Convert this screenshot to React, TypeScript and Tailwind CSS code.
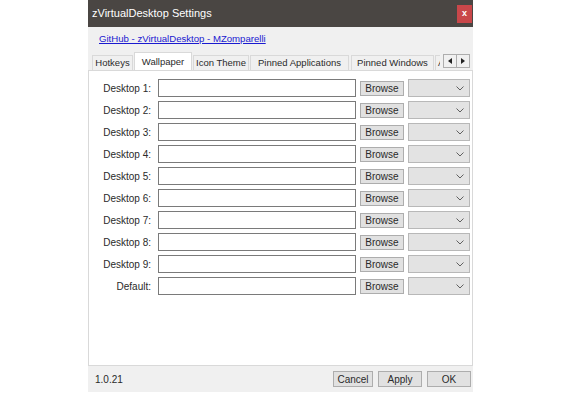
import React from 'react'

const rows = ['Desktop 1:', 'Desktop 2:', 'Desktop 3:', 'Desktop 4:', 'Desktop 5:', 'Desktop 6:', 'Desktop 7:', 'Desktop 8:', 'Desktop 9:', 'Default:']

const tabs = [
  { label: 'Hotkeys', cls: 'w-[41px] justify-center' },
  { label: 'Wallpaper', cls: 'w-[58px] ml-[1px] justify-center' },
  { label: 'Icon Theme', cls: 'w-[56px] ml-[1px] justify-center' },
  { label: 'Pinned Applications', cls: 'w-[99px] ml-[1px] justify-center' },
  { label: 'Pinned Windows', cls: 'w-[83px] ml-[2px] justify-center' },
  { label: 'Advanced', cls: 'w-[50px] ml-[1px] pl-[2px] justify-start' },
]

function Chevron() {
  return (
    <svg width="8" height="5" viewBox="0 0 8 5" className="text-[#606060]">
      <polyline points="0.5,0.5 4,4 7.5,0.5" fill="none" stroke="currentColor" strokeWidth="1" />
    </svg>
  )
}

function Row({ label }: { label: string }) {
  return (
    <div className="flex items-center h-[18px]">
      <div className="w-[62px] text-right text-[10px] text-[#2a2a2a]">{label}</div>
      <div className="ml-[7px] w-[198px] h-[18px] bg-white border border-[#7a7a7a]" />
      <div className="ml-[4px] w-[44px] h-[15px] bg-[#e1e1e1] border border-[#adadad] flex items-center justify-center text-[10px] text-[#2a2a2a]">
        Browse
      </div>
      <div className="ml-[4px] w-[62px] h-[18px] bg-[#e3e3e3] border border-[#b8b8b8] flex items-center justify-end pr-[5px]">
        <Chevron />
      </div>
    </div>
  )
}

export default function App() {
  return (
    <div className="w-[579px] h-[396px] bg-white overflow-hidden" style={{ fontFamily: '"Liberation Sans", Arial, sans-serif' }}>
      <div className="ml-[88px] w-[385px] h-[392px] bg-[#f0f0f0] flex flex-col">
        <div className="h-[27px] bg-[#4a4643] flex items-center justify-between pl-[4px] pr-[1px]">
          <span className="text-white text-[11px]">zVirtualDesktop Settings</span>
          <div className="w-[15px] h-[18px] bg-[#c9474a] flex items-center justify-center text-white text-[9px] font-bold leading-none">x</div>
        </div>

        <div className="h-[25px] flex items-center pl-[11px]">
          <span className="text-[9.6px] text-[#1a1ad0] underline">GitHub - zVirtualDesktop - MZomparelli</span>
        </div>

        <div className="h-[18px] flex items-end pl-[4px]">
          <div className="flex items-end w-[348px] overflow-hidden">
            {tabs.map((t, i) =>
              i === 1 ? (
                <div
                  key={t.label}
                  className={`${t.cls} h-[19px] -mb-[1px] bg-white border border-b-0 border-[#d9d9d9] text-[9.5px] text-[#2a2a2a] flex items-center shrink-0 relative z-10`}
                >
                  {t.label}
                </div>
              ) : (
                <div
                  key={t.label}
                  className={`${t.cls} h-[15px] bg-[#f0f0f0] border border-b-0 border-[#d9d9d9] text-[9.5px] text-[#2a2a2a] flex items-center shrink-0`}
                >
                  {t.label}
                </div>
              )
            )}
          </div>
          <div className="ml-[3px] mb-[2px] flex">
            <div className="w-[14px] h-[14px] border border-[#adadad] bg-[#f0f0f0] flex items-center justify-center">
              <svg width="4" height="6" viewBox="0 0 4 6"><polygon points="4,0 0,3 4,6" fill="#222" /></svg>
            </div>
            <div className="w-[13px] h-[14px] border border-l-0 border-[#adadad] bg-[#f0f0f0] flex items-center justify-center">
              <svg width="4" height="6" viewBox="0 0 4 6"><polygon points="0,0 4,3 0,6" fill="#222" /></svg>
            </div>
          </div>
        </div>

        <div className="h-[296px] bg-white border border-[#d9d9d9] flex flex-col gap-[4px] pt-[8px]">
          {rows.map(r => (
            <Row key={r} label={r} />
          ))}
        </div>

        <div className="flex-1 flex items-center pl-[7px] pr-[2px]">
          <span className="text-[10px] text-[#2a2a2a]">1.0.21</span>
          <div className="ml-auto flex gap-[5px]">
            <div className="w-[40px] h-[16px] bg-[#e1e1e1] border border-[#adadad] flex items-center justify-center text-[10px] text-[#2a2a2a]">Cancel</div>
            <div className="w-[44px] h-[16px] bg-[#e1e1e1] border border-[#adadad] flex items-center justify-center text-[10px] text-[#2a2a2a]">Apply</div>
            <div className="w-[44px] h-[16px] bg-[#e1e1e1] border border-[#adadad] flex items-center justify-center text-[10px] text-[#2a2a2a]">OK</div>
          </div>
        </div>
      </div>
    </div>
  )
}
